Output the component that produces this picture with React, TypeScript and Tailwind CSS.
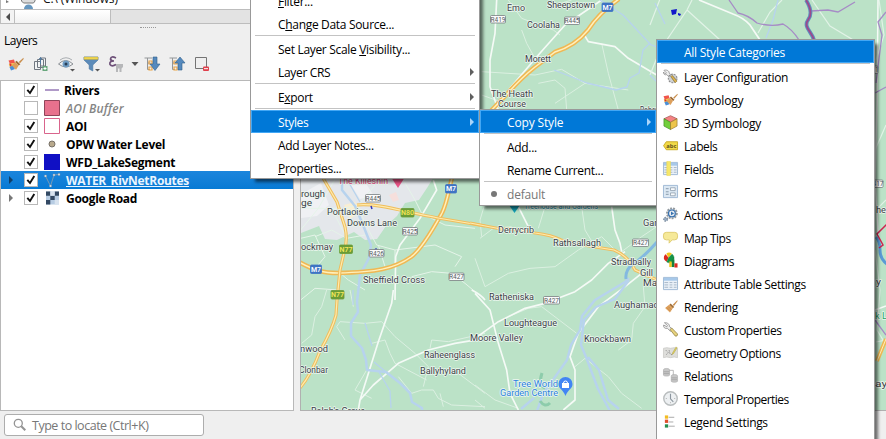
import React from "react";

type IconProps = { children: React.ReactNode; className?: string };

function Ico({ children, className = "" }: IconProps) {
  return (
    <svg viewBox="0 0 16 16" className={"h-4 w-4 shrink-0 overflow-visible " + className} fill="none">
      {children}
    </svg>
  );
}

const Brush = () => (
  <>
    <path d="M15.200 1.200 10.400 6l1.300 1.400L15.600 2.200Z" fill="#c98d4b" />
    <path d="M8 4.800 12 8.600 10.300 9.800 6.800 6.300Z" fill="#9b6a35" />
    <path d="M6.800 5.800 10.600 9.500 7.400 14.500 2.200 9.600Z" fill="#e0a562" />
    <path d="m4 9 4 4M5.500 8l3.500 3.500" stroke="#b87836" strokeWidth=".6" />
  </>
);

const Symbology = () => (
  <>
    <path d="M.5 4.500 6 3.500 7 7 2 8Z" fill="#f0554b" />
    <path d="M.8 8 6 7l1 3-5 1.500Z" fill="#f5c64a" />
    <path d="M1.500 11 5 9.500 7 13l-4 1.500Z" fill="#4c8fd6" />
    <path d="m1.500 7 2.500 2-2 1.500Z" fill="#d62c36" />
    <path d="M15.400 1.800 10.800 6l1.200 1.200L15.700 3Z" fill="#c98d4b" />
    <path d="M8.500 4.800 12.300 8.300 10.800 9.500 7.200 6Z" fill="#9b6a35" />
    <path d="m7.200 6 3.500 3.400L8 13.800 3.800 9.500Z" fill="#dda05c" />
  </>
);

const Wrench = () => (
  <>
    <path
      d="M1.500.8 4.800 3.800 4 5 .7 3.200C0 5.500 2.200 7.600 4.600 6.700L8 10l2-2.300-3.200-3C7.600 2.500 4 .2 1.500.8Z"
      fill="#eee"
      stroke="#858585"
      strokeWidth=".8"
    />
    <path d="m7.500 8 1.800-1.600 6 6.200c.9 1.800-1.200 3.200-2.400 2.200Z" fill="#e8d37d" stroke="#8b7c42" strokeWidth=".8" />
  </>
);

const Table = () => (
  <>
    <path d="M.5 1.500h15v13H.5Z" fill="#eaf1f8" stroke="#9fb9d4" />
    <path d="M1 2h14v3H1Z" fill="#a7c8e9" />
    <path d="M1.500 7h4M1.500 9.500h4M1.500 12h4M7 7h3M7 9.500h3M7 12h3M11.500 7h3M11.500 9.500h3M11.500 12h3" stroke="#a4b4c5" />
  </>
);

const styleIcons: Record<string, React.ReactNode> = {
  config: (
    <>
      <path d="M1 1.500 3.500 4 2.500 5.300.5 3.200C.3 5.500 2 6.800 4 6l3 3 2-2.300-2.500-2.400C7 2 3.500.3 1 1.500Z" fill="#eee" stroke="#888" strokeWidth=".8" />
      <circle cx="10.300" cy="10" r="4.600" fill="#cfd2d5" stroke="#8d8d8d" strokeWidth="1.200" strokeDasharray="2 1.200" />
      <path d="m7.500 7 1.800-1 5.300 5.800-2 2.500Z" fill="#eee" stroke="#777" strokeWidth=".6" />
      <path d="m8.500 8 1.300-1 5 6-1.800 1.500Z" fill="#e5b94e" stroke="#8e742f" strokeWidth=".7" />
    </>
  ),
  symbology: <Symbology />,
  cube: (
    <>
      <path d="M8 .7 15 4 8 7.800 1 4Z" fill="#f48383" stroke="#9c4848" strokeWidth=".7" />
      <path d="M1 4 8 7.800V15.500L1 11.800Z" fill="#72cf3b" stroke="#3e8a22" strokeWidth=".7" />
      <path d="M15 4 8 7.800V15.500l7-3.700Z" fill="#edc54b" stroke="#95752a" strokeWidth=".7" />
    </>
  ),
  labels: (
    <>
      <path d="M3.500 4h12v8.500h-12L.6 8.200Z" fill="#f1d947" stroke="#c7aa25" />
      <text x="3.500" y="10.500" fontSize="6.200" fontWeight="700" fill="#5e511d" fontFamily="Open Sans, sans-serif" letterSpacing="0" textLength="11">abc</text>
    </>
  ),
  fields: (
    <>
      <Table />
      <path d="M4 .5h4v15H4Z" fill="#f6e76a" stroke="#ecd94c" strokeWidth=".5" />
    </>
  ),
  forms: (
    <>
      <path d="M.5 1.500h15v13H.5Z" fill="#dce8f3" stroke="#9fb9d4" />
      <path d="M8 4h5v3H8ZM8 9.500h5v3H8Z" fill="#f9fbfc" stroke="#8999a9" strokeWidth=".8" />
      <path d="M3 5h3M3 8.300h3M3 11h3" stroke="#8396a9" />
    </>
  ),
  actions: (
    <>
      <circle cx="9.500" cy="6.800" r="5.300" fill="#d4d9de" stroke="#92999f" strokeWidth="2" strokeDasharray="2 1.200" />
      <circle cx="9.500" cy="6.800" r="3.600" fill="#e5eaf0" stroke="#346fae" strokeWidth="1.300" />
      <path d="m8.500 4.800 3.300 2-3.300 2Z" fill="#3672b0" />
      <circle cx="2.800" cy="13" r="1.900" fill="#9db2c9" stroke="#8293a5" strokeWidth="1.600" strokeDasharray="1.500 .8" />
    </>
  ),
  tips: <path d="M3.500 2.500h9A3 3 0 0 1 15.500 5.500v2a3 3 0 0 1-3 3H9.800L6.500 14l.2-3.500H3.500a3 3 0 0 1-3-3v-2a3 3 0 0 1 3-3Z" fill="#f6e998" stroke="#dfcc70" />,
  diagrams: (
    <>
      <path d="M6 4.700 3.500.8a4.700 4.700 0 0 1 6 0Z" fill="#f2c51b" />
      <path d="M6 5 2.800 1.200a4.700 4.700 0 0 0 1 8.200Z" fill="#dc2b20" />
      <path d="m6 5 3.600-3.800A4.900 4.900 0 0 1 4 9.600Z" fill="#159447" stroke="#0d6b34" strokeWidth=".4" />
      <path d="M6.700 9h2.700v6H6.700Z" fill="#f2c51b" />
      <path d="M9.400 7h2.800v8H9.400Z" fill="#15813c" />
      <path d="M12.200 11h3.300v4.500h-3.300Z" fill="#dc2b20" />
    </>
  ),
  table: <Table />,
  rendering: <Brush />,
  custom: <Wrench />,
  geometry: (
    <>
      <path d="M.5 3.500 4 2.800 8 3.500l4-.7 3.500.7v10l-3.500-.7-4 .7-4-.7-3.500.7Z" fill="#dededb" stroke="#c3c3c0" strokeWidth=".7" />
      <path d="M3 5.500 5.500 8l-2.500 3M6.500 5.500l1 4 3 1.500" stroke="#8c8c8c" strokeDasharray="1.500 1" />
      <path d="m14 2-3.700 6.200-.5 2 1.500-1.200L15 3Z" fill="#e7d65c" stroke="#a2983c" strokeWidth=".5" />
    </>
  ),
  relations: (
    <>
      <path d="M.5 2c0-2 6.500-2 6.500 0v5.500c0 1.500-6.500 1.500-6.500 0ZM8.800 8.500c0-2 6.700-2 6.700 0v5.500c0 1.500-6.700 1.500-6.700 0Z" fill="#c7c7c7" stroke="#adadad" strokeWidth=".7" />
      <path d="M.7 4h6M.7 6h6M9 10.500h6M9 12.500h6M7 2.500h4V7" stroke="#999" strokeWidth=".7" />
    </>
  ),
  temporal: (
    <>
      <circle cx="8" cy="8" r="7.200" fill="#edf0f2" stroke="#b9bdbe" strokeWidth="1.500" />
      <path d="M8 3v5.300l3 3.200" stroke="#8c969f" strokeWidth="1.200" />
      <path d="M3 8h1M12 8h1M8 12v1" stroke="#aaa" />
    </>
  ),
  legend: (
    <>
      <path d="M2 1.500h3.500V5H2Z" fill="#f3bc22" />
      <path d="M2 6h3.500v3.500H2Z" fill="#df4f2c" />
      <path d="M2 11h3.500v3.500H2Z" fill="#268f50" />
      <path d="M6 3.500h6M6 8.500h5M6 13h6.500" stroke="#a5a5a5" strokeWidth="1" />
    </>
  ),
};

const styleItems: [string, string, string][] = [
  ["config", "Layer Configuration", ""],
  ["symbology", "Symbology", "tracking-[-0.180px]"],
  ["cube", "3D Symbology", "tracking-[-0.220px]"],
  ["labels", "Labels", "tracking-[-0.400px]"],
  ["fields", "Fields", "tracking-[-0.400px]"],
  ["forms", "Forms", ""],
  ["actions", "Actions", ""],
  ["tips", "Map Tips", "tracking-[-0.500px]"],
  ["diagrams", "Diagrams", "tracking-[-0.400px]"],
  ["table", "Attribute Table Settings", "tracking-[-0.380px]"],
  ["rendering", "Rendering", "tracking-[-0.400px]"],
  ["custom", "Custom Properties", "tracking-[-0.400px]"],
  ["geometry", "Geometry Options", "tracking-[-0.400px]"],
  ["relations", "Relations", ""],
  ["temporal", "Temporal Properties", "tracking-[-0.530px]"],
  ["legend", "Legend Settings", ""],
];

type LabelProps = { x: number; y: number; w: number; t: string; c?: string; s?: number };

function Place({ x, y, w, t, c = "#3b4147", s = 9.5 }: LabelProps) {
  return (
    <text x={x} y={y} textLength={w} lengthAdjust="spacingAndGlyphs" fontSize={s} fill={c} stroke="#edf7f0" strokeWidth="1.500" paintOrder="stroke" strokeLinejoin="round">
      {t}
    </text>
  );
}

function Shield({ x, y, w, t, kind }: { x: number; y: number; w: number; t: string; kind: "m" | "n" | "r" }) {
  const fill = kind === "m" ? "#3f74c4" : kind === "n" ? "#6a9c37" : "#fbfbfb";
  const ink = kind === "m" ? "#fff" : kind === "n" ? "#f5e85b" : "#555b60";
  return (
    <g>
      <rect x={x} y={y} width={w} height={kind === "r" ? 7.5 : 8.5} rx="1" fill={fill} stroke={kind === "r" ? "#777d80" : fill} strokeWidth=".8" />
      <text x={x + w / 2} y={y + (kind === "r" ? 6.2 : 6.8)} textAnchor="middle" fontSize={kind === "r" ? 6.5 : 7} fontWeight={kind === "r" ? 400 : 600} fill={ink}>
        {t}
      </text>
    </g>
  );
}

const third = 1 / 3;
const motorway = [
  "M297 261C315 271 324 273 338 273C376 272 394 269 411 257C423 248 437 222 442 213C451 195 449 170 466 145Q476 130 492 110",
  "M486 116L508 93Q521 78 535 67L555 52Q575 46 588 30Q599 13 619 -1",
];
const national = [
  "M357 205C378 203 401 211 438 218L485 226",
  "M323 178L337 202 345 227Q348 240 344 253L340 270 337 300 336 315Q332 330 320 351 311 375 300 388",
  "M470 223L501 229Q521 229 535 233 552 235 561 240L589 246 614 250Q628 256 635 270L657 280",
];

function MapView() {
  return (
    <svg viewBox="301 0 585 410" preserveAspectRatio="none" className="block h-[410px] w-[585px]" fill="none" fontFamily="Roboto, sans-serif">
      <rect x="301" y="0" width="585" height="410" fill="#bbe2c7" />
      <path d="M301 175H435L427 188 419 200 405 203 397 216 386 226 377 239 365 240 354 232 337 240 325 239 319 226 301 233Z" fill="#e4e7eb" />
      <path d="M301 194 321 183 329 205 317 216 301 218ZM351 185H367L374 196 360 199Z" fill="#f0f1f4" />
      <path d="m389 195 7-3 3 8-6 2Z" fill="#f6dfdc" />
      <path d="M344 205 355 202 362 211 350 219Z" fill="#f9eed2" />

      {/* Local roads, upper and lower left of the canvas */}
      <g transform={`translate(295 170) scale(${third})`} stroke="#e5f4e9" strokeWidth="3" strokeLinejoin="round">
        <path d="M17 115H145L190 105 240 45M17 180 70 115 120 28M60 200 110 180 155 205 210 195M115 125 155 205M17 205 60 195 90 260 65 290M190 105 210 160 245 225 300 240 420 225 500 260 480 290M250 225 270 290M300 240 300 290M350 320 410 305 470 310 510 340 570 390M17 390 60 355 130 360M325 30 360 90 380 130 450 165 540 175M130 305 160 330 210 360" />
        <path d="M300 390 302 260 315 225 375 145 425 60 415 30" stroke="#f5faf6" strokeWidth="5" />
      </g>
      <g transform={`translate(295 290) scale(${third})`} stroke="#dcf0e2" strokeWidth="3" strokeLinejoin="round">
        <path d="M95 0 80 50 60 80 50 135 20 160M165 0 175 50M150 150 125 110 135 95 210 100 260 95 300 140 360 190 400 230 385 290M230 160 270 150 285 190 300 220 395 270M215 240 180 300 230 325M405 175 410 150 460 155 570 130M400 240 490 250 570 310M380 300 415 300 430 325 470 345 570 350M310 260 350 310 380 300M435 310 445 350" />
        <path d="M295 0 290 40 250 155 195 330 190 360M195 330 235 285 310 220 400 180 480 160 570 145M530 0Q560 15 570 30" stroke="#f4faf6" strokeWidth="5" />
      </g>

      {/* Local roads in the centre */}
      <g transform={`translate(475 0) scale(${third})`} stroke="#dbf0e1" strokeWidth="3" strokeLinejoin="round">
        <path d="M100 0 140 55 235 90 255 105M225 20 290 0M140 90 155 130 180 175M20 215 180 225 260 208 330 250 460 270M190 250 240 240 270 265 275 330M380 130 400 220 430 330M240 310 300 270 330 250M20 285 90 310 110 330" />
        <path d="M65 0 60 100 45 180 45 260 70 330M380 0 270 75 190 165 105 265 60 330M325 100 340 125 420 140 460 175 545 225" stroke="#f5faf6" strokeWidth="5" />
      </g>
      <g transform={`translate(475 200) scale(${third})`} stroke="#dbf0e1" strokeWidth="3" strokeLinejoin="round">
        <path d="M20 110 15 60 30 10M15 115 55 85 110 80M190 85 210 20M320 20 330 90 360 140 440 155M0 175 30 260 100 220 165 205 240 200 310 150 380 110 425 155M440 155 500 110 545 80M100 350 160 325 200 320 305 400M505 260 510 320 475 370 470 420 430 450M0 555 60 600 130 625M300 500 330 475 400 530 440 580 500 625M0 600 30 625" />
        <path d="M130 20 160 80M410 20 420 90 435 130 440 155M0 280 45 330 70 430 95 510 105 580 130 630M0 415 70 365 150 325 210 310 300 275 350 240 400 190 450 155M500 220 450 260 370 320 310 400 285 470 300 510 300 600 265 630" stroke="#f5faf6" strokeWidth="5" />
      </g>
      <g stroke="#e2f3e7" strokeWidth="1.200">
        <path d="M650 75 660 50 687 10 692 0M687 10 720 40M650 25 660 -1M758 33 770 12 782 0M812 0 830 26 870 50M876 60 884 35 879 0M875 150 886 125M876 210 886 200M875 250 880 290 877 330 886 345M876 342 886 340" />
        <path d="M699 0Q721 9 733 14 744 18 750 25L760 40" stroke="#f5faf6" strokeWidth="1.700" />
        <path d="M878 0 877 100 875 180 879 250M875 310 886 306" stroke="#f5faf6" strokeWidth="1.500" />
      </g>

      {/* Rivers */}
      <g stroke="#b7d3ee" strokeWidth="1.300" strokeLinejoin="round">
        <path d="M342 178 342 190 355 206 363 225 371 245 369 258 360 275 357 302 358 312 351 323 351 336 362 348 366 360 367 370 386 372 400 383 410 393 412 402 422 408V411" strokeWidth="2.500" />
        <path d="M353 290V305M365 323 372 346M374 362 386 372M379 372 390 391 391 408M345 176 360 202" />
        <path d="M600 0 623 15 651 45M554 70 587 83 616 90 627 87 630 78 639 73 643 50 649 44 657 47M655 3 665 24M778 0 773 20 766 38M650 75 657 82" />
        <path d="M629 278 625 282 595 300 582 316 580 330 571 345 567 360 543 394 537 411M629 280 615 299 596 307 584 320 581 345 586 357 598 389 610 411M588 357 599 370 608 400 619 409M521 409 534 398" strokeWidth="2.400" />
      </g>

      {motorway.map((d) => (
        <g key={d}>
          <path d={d} stroke="#efb854" strokeWidth="4.500" />
          <path d={d} stroke="#fff0bb" strokeWidth="1.500" />
        </g>
      ))}
      {national.map((d) => (
        <g key={d}>
          <path d={d} stroke="#efbd5d" strokeWidth="3.200" />
          <path d={d} stroke="#ffebac" strokeWidth="1.200" />
        </g>
      ))}
      <path d="M657 242Q644 257 633 264 625 270 626 279" stroke="#83b9e0" strokeWidth="3" />
      <path d="m371 206 1 3M373 251l3-2 3 3 3 1" stroke="#3036b9" strokeWidth="1.500" />
      <path d="M542 373Q538 385 545 388M540 401Q545 408 550 403" stroke="#8dccab" strokeWidth="3" />

      {/* Area boundary and route overlay */}
      <path d="m671 10 6-1-1 5-4 1ZM678 13l3 1-1 2-2-1Z" fill="#1016ca" />
      <path d="M729 0 738 13Q748 15 757 23 771 27 783 24 792 29 799 40M811 11 828 10 838 12 855 2M886 12 878 22 882 35 876 83M875 93 886 87M875 320 886 335" stroke="#a68bc6" strokeWidth="1.300" />
      <path d="M806 0C811 8 812 15 808 20C803 27 812 32 814 40" stroke="#5f8fbd" strokeWidth="3.800" />
      <path d="M806 0C811 8 812 15 808 20C803 27 812 32 814 40" stroke="#9c498d" strokeWidth="1.800" />
      <path d="M876 237Q880 241 880 250 880 259 887 264" stroke="#5a9bd5" strokeWidth="3" />
      <path d="M887 224 877 234 883 245 879 248" stroke="#ce2350" strokeWidth="1.500" />
      <path d="m877 361 9-22" stroke="#efb854" strokeWidth="4" />
      <path d="m877 361 9-22" stroke="#fff0bb" />

      <Place x={507} y={11} w={18} t="Emo" />
      <Place x={547} y={8} w={48} t="Sheepstown" />
      <Place x={527} y={28} w={33} t="Coolaha" />
      <Place x={525} y={62} w={26} t="Morett" />
      <Place x={491} y={97} w={42} t="The Heath" />
      <Place x={498} y={107} w={28} t="Course" />
      <Place x={640} y={113} w={38} t="Robertstown" />
      <Place x={338} y={184} w={50} t="The Killeshin" c="#e23e79" />
      <Place x={301} y={197} w={24} t="rough" />
      <Place x={301} y={206} w={11} t="ge" />
      <Place x={327} y={215} w={41} t="Portlaoise" />
      <Place x={347} y={226} w={50} t="Downs Lane" />
      <Place x={301} y={250} w={32} t="ockmay" />
      <Place x={363} y={283} w={62} t="Sheffield Cross" />
      <Place x={498} y={233} w={36} t="Derrycrib" />
      <Place x={553} y={246} w={48} t="Rathsallagh" />
      <Place x={611} y={265} w={40} t="Stradbally" />
      <Place x={643} y={226} w={32} t="Garrans" />
      <Place x={640} y={276} w={13} t="Gill" />
      <Place x={643} y={286} w={22} t="Main" />
      <Place x={489} y={300} w={45} t="Ratheniska" />
      <Place x={504} y={326} w={53} t="Loughteague" />
      <Place x={614} y={308} w={50} t="Aughamadd" />
      <Place x={470} y={341} w={53} t="Moore Valley" />
      <Place x={584} y={342} w={47} t="Knockbawn" />
      <Place x={424} y={358} w={51} t="Raheenglass" />
      <Place x={420} y={374} w={46} t="Ballyhyland" />
      <Place x={300} y={352} w={28} t="nwood" />
      <Place x={299} y={373} w={29} t="Clonbar" />
      <Place x={311} y={414} w={54} t="Ralph's Grove" />
      <Place x={513} y={387} w={45} t="Tree World" c="#2c82dd" />
      <Place x={500} y={396} w={58} t="Garden Centre" c="#2c82dd" />
      <Place x={524} y={209} w={74} t="Treehouse and Gardens" c="#168d9e" />
      <Place x={876} y={213} w={10} t="he" />
      <Place x={876} y={285} w={5} t="y" />
      <Place x={875} y={319} w={12} t="k L" c="#28a268" />
      <Place x={875} y={387} w={12} t="ay" />

      <Shield x={602} y={3} w={11} t="M7" kind="m" />
      <Shield x={445.5} y={184.5} w={11} t="M7" kind="m" />
      <Shield x={310.5} y={265} w={11} t="M7" kind="m" />
      <Shield x={401} y={208.5} w={13} t="N80" kind="n" />
      <Shield x={339.5} y={245} w={13} t="N77" kind="n" />
      <Shield x={331} y={290.5} w={13} t="N77" kind="n" />
      <Shield x={365.5} y={194.5} w={15} t="R445" kind="r" />
      <Shield x={402.5} y={227.5} w={15} t="R425" kind="r" />
      <Shield x={369} y={249.5} w={15} t="R426" kind="r" />
      <Shield x={449} y={273} w={15} t="R427" kind="r" />
      <Shield x={490.5} y={15.5} w={15} t="R419" kind="r" />
      <Shield x={564.5} y={17} w={15} t="R445" kind="r" />
      <Shield x={632.5} y={239} w={16} t="R427" kind="r" />
      <Shield x={543.5} y={296.5} w={16} t="R427" kind="r" />
      <Shield x={869} y={180} w={14} t="R417" kind="r" />
      <Shield x={868} y={66} w={10} t="R41" kind="r" />

      <path d="m391 177 7 11 7-11Z" fill="#e95486" />
      <path d="m509 205 5.500 8 5.500-8Z" fill="#13a0b4" />
      <path d="M565.500 396C563 389 558.500 389 558.500 384a7 7 0 0 1 14 0c0 5-4.500 5-7 12Z" fill="#4285f4" />
      <path d="M562 383h7v5h-7Z" fill="#fff" />
      <path d="M563.500 383a2 2 0 0 1 4 0" stroke="#fff" />
    </svg>
  );
}

function Arrow({ on = false }: { on?: boolean }) {
  return (
    <svg viewBox="0 0 4 8" className="ml-auto mr-1 h-2 w-1 shrink-0">
      <path d="M0 0 4 4 0 8Z" fill={on ? "#a9d5fb" : "#5f5f5f"} />
    </svg>
  );
}

type RowProps = { children: React.ReactNode; arrow?: boolean; on?: boolean };

function MenuRow({ children, arrow = false, on = false }: RowProps) {
  return (
    <div
      className={
        "flex h-[23px] shrink-0 items-center whitespace-nowrap border pl-[26px] " +
        (on ? "border-[#42a7f5] bg-[#0078d7] text-white" : "border-transparent")
      }
    >
      <span className="pt-0.5">{children}</span>
      {arrow && <Arrow on={on} />}
    </div>
  );
}

const Line = () => <div className="mx-1 mb-px h-px shrink-0 bg-[#c3c3c3]" />;

const U = ({ children }: { children: string }) => <span className="underline underline-offset-1">{children}</span>;

function Check({ on = true }: { on?: boolean }) {
  return (
    <span className="flex h-[14px] w-[14px] shrink-0 items-center justify-center border border-[#b8b8b8] bg-white">
      {on && (
        <svg viewBox="0 0 12 12" className="h-3 w-3" fill="none">
          <path d="M2.300 5.800 5 9 9.300 2" stroke="#111" strokeWidth="1.900" />
        </svg>
      )}
    </span>
  );
}

type Layer = { name: string; symbol: React.ReactNode; style?: string; off?: boolean; expand?: boolean; selected?: boolean };

const layers: Layer[] = [
  { name: "Rivers", symbol: <path d="M1 8h14" stroke="#b09ac8" strokeWidth="2" />, style: "-ml-0.5 font-bold tracking-[-0.250px]" },
  { name: "AOI Buffer", off: true, symbol: <path d="M.5.5h15v15H.5Z" fill="#e8718d" stroke="#8e4459" />, style: "font-semibold italic text-[#858585] tracking-[0.150px]" },
  { name: "AOI", symbol: <path d="M.5.5h15v15H.5Z" fill="#fff" stroke="#d9648c" />, style: "font-bold tracking-[-0.350px]" },
  { name: "OPW Water Level", symbol: <circle cx="8" cy="8" r="3" fill="#b8a98c" stroke="#777067" />, style: "font-bold tracking-[-0.250px]" },
  { name: "WFD_LakeSegment", symbol: <path d="M0 0h16v16H0Z" fill="#1010c4" />, style: "font-bold tracking-[-0.250px]" },
  {
    name: "WATER_RivNetRoutes",
    expand: true,
    selected: true,
    symbol: (
      <>
        <path d="m1.500 4 5 10L10 3l4-.5" stroke="#7899b5" />
        <path d="M.5 3h2v2h-2ZM5.500 13h2v2h-2ZM9 2h2v2H9ZM14 1.500h2v2h-2Z" fill="#e9edf0" stroke="#718ea8" strokeWidth=".5" />
      </>
    ),
    style: "font-bold underline text-[#eaf5ff] tracking-[-0.300px]",
  },
  {
    name: "Google Road",
    expand: true,
    symbol: (
      <>
        <path d="M2 1.500h13v13H2Z" fill="#b7cce3" />
        <path d="M2 1.500h4.300v4.300H2ZM10.700 1.500H15v4.300h-4.300ZM6.300 5.800h4.400v4.300H6.300ZM2 10.100h4.300v4.400H2Z" fill="#334963" />
        <path d="M10.700 10.100H15v4.400h-4.300ZM6.300 1.500h4.400v4.300H6.300Z" fill="#d8e3ef" />
      </>
    ),
    style: "font-bold tracking-[-0.300px]",
  },
];

const tools: [string, React.ReactNode][] = [
  ["ml-2", <Symbology key="a" />],
  ["ml-[9px]", (
    <g key="b">
      <path d="M1.500 5.500h6v8h-6ZM4.500 3.500h6v8h-6ZM7.500 2h5v8h-5Z" stroke="#707780" fill="#f1f3f4" />
      <path d="M7.500 8V1.500M5.800 3.500l1.700-2 1.800 2" stroke="#527a9f" />
      <path d="M9.500 10h5v5h-5Z" fill="#68a77c" />
      <path d="M12 11v3M10.500 12.500h3" stroke="#fff" />
    </g>
  )],
  ["ml-[9px]", (
    <g key="c">
      <path d="M.5 8Q7.500 1 15 8 8 14 .5 8Z" fill="#f3f4f5" stroke="#8a8f94" />
      <circle cx="8" cy="8" r="3.500" fill="#6f9cc3" />
      <circle cx="8" cy="8" r="1.500" fill="#293e55" />
      <path d="M2 4Q8-.5 14 4" stroke="#a9adb1" />
      <path d="M12 13h5l-2.500 2.500Z" fill="#555" />
    </g>
  )],
  ["ml-[9px]", (
    <g key="d">
      <path d="M1 1h14v3L9.800 9v6l-3.600-2V9L1 4Z" fill="#5c8bb9" stroke="#45739f" strokeWidth=".6" />
      <path d="M1 1h14v2.500H1Z" fill="#f0d54e" stroke="#b2a13c" strokeWidth=".4" />
      <path d="M12 13h5l-2.500 2.500Z" fill="#555" />
    </g>
  )],
  ["ml-[9px]", (
    <g key="e">
      <path d="M8 2Q3-.5 2.500 3 2.800 5 6 5 1 5 2 8.500 4 11 8 8.500" stroke="#6d5078" strokeWidth="1.700" />
      <path d="M8 8h7v3l-1.500 1.500V16h-2v-3.500H10V16H8Z" fill="#b6b7b9" />
    </g>
  )],
  ["ml-0.5", <path key="f" d="M5.500 6h7L9 10Z" fill="#555" />],
  ["ml-[2px]", (
    <g key="g">
      <path d="M.5 2H8M3.500 2v11.500H6M3.500 7h3" stroke="#939698" />
      <path d="M5 5h3v3H5ZM5 11h3v3H5Z" stroke="#eba547" strokeWidth="1.200" />
      <path d="M9 1h4v7h3l-5 6.500L6 8h3Z" fill="#5589bd" stroke="#315f8c" strokeWidth=".6" />
    </g>
  )],
  ["ml-[9px]", (
    <g key="h">
      <path d="M.5 2H8M3.500 2v11.500H6M3.500 7h3" stroke="#939698" />
      <path d="M5 5h3v3H5ZM5 11h3v3H5Z" stroke="#eba547" strokeWidth="1.200" />
      <path d="M9 14h4V7h3l-5-6-5 6h3Z" fill="#5589bd" stroke="#315f8c" strokeWidth=".6" />
    </g>
  )],
  ["ml-[9px]", (
    <g key="i">
      <path d="M1.500 1.500h11v11h-11Z" stroke="#747474" />
      <rect x="9" y="10.500" width="6" height="4.500" rx="1" fill="#df3f4b" />
      <path d="M10 12.700h4" stroke="#fff" />
    </g>
  )],
];

export default function App() {
  return (
    <div className="relative h-[439px] w-[886px] overflow-hidden bg-[#efefef] font-['Open_Sans','Noto_Sans',sans-serif] text-[12px] leading-[18px] tracking-[-0.320px] text-black">
      <div className="flex">
        <aside className="flex w-[300px] flex-col">
          <div className="flex h-[9px] items-end overflow-hidden border-l border-[#b8b8b8] bg-white">
            <svg viewBox="0 0 299 9" className="h-[9px] w-[299px]" fill="none" fontFamily="Open Sans">
              <path d="m5 0 3 2-3 1Z" fill="#777" />
              <path d="M20.500-4v5l2 2h10l1.500-2v-5" fill="#ddd" stroke="#777" />
              <path d="M23 9a4.500 4.500 0 0 1 9 0" fill="#6797bf" />
              <text x="42" y="2.500" fontSize="12" fill="#111" letterSpacing="0" textLength="75">C:\ (Windows)</text>
            </svg>
          </div>
          <div className="flex h-[15px] border-y border-[#bdbdbd] bg-[#e3e3e3]">
            <div className="flex w-[15px] items-center justify-center border-x border-[#bdbdbd] bg-[#f3f3f3]">
              <svg viewBox="0 0 4 8" className="h-2 w-1"><path d="M4 0 0 4l4 4Z" fill="#4b4b4b" /></svg>
            </div>
            <div className="w-24 border-r border-[#bdbdbd] bg-gradient-to-b from-white to-[#f2f2f2]" />
          </div>
          <div className="flex h-[6px] items-center pl-[140px]">
            <div className="w-4 border-t border-dotted border-[#999]" />
          </div>
          <h2 className="h-5 pl-1 leading-[22px] tracking-[-0.500px]">Layers</h2>
          <div className="flex h-[30px] items-center pb-0.5">
            {tools.map(([gap, icon], i) => (
              <Ico key={i} className={gap}>{icon}</Ico>
            ))}
          </div>
          <div className="h-[331px] w-[294px] border border-[#b8b8b8] bg-white">
            {layers.map((l) => (
              <div key={l.name} className={"flex h-[18px] items-center " + (l.selected ? "bg-gradient-to-b from-[#1b85dc] to-[#077ad4]" : "")}>
                <span className="flex w-[23px] shrink-0 pl-2">
                  {l.expand && (
                    <svg viewBox="0 0 4 8" className="h-2 w-1"><path d="M0 0 4 4 0 8Z" fill={l.selected ? "#103e68" : "#777"} /></svg>
                  )}
                </span>
                <Check on={!l.off} />
                <Ico className="mr-1.5 ml-1.5">{l.symbol}</Ico>
                <span className={"whitespace-nowrap pt-0.5 " + (l.style ?? "")}>{l.name}</span>
              </div>
            ))}
          </div>
        </aside>
        <main className="h-[411px] w-[586px] overflow-hidden border-b border-l border-[#b0b0b0] tracking-normal">
          <MapView />
        </main>
      </div>
      <footer className="flex h-7 px-1 pt-[3px]">
        <div className="flex h-[22px] w-[200px] items-center rounded-[3px] border border-[#adadad] bg-white pl-2 text-[12.5px] tracking-[-0.480px] text-[#777]">
          <svg viewBox="0 0 14 14" className="mr-[5px] h-[14px] w-[14px]" fill="none" stroke="#939393">
            <circle cx="5.300" cy="5.300" r="4" strokeWidth="1.300" />
            <path d="m8.300 8.300 4 4" strokeWidth="2" />
          </svg>
          <span className="pt-0.5">Type to locate (Ctrl+K)</span>
        </div>
      </footer>

      <div className="absolute left-[250px] top-[-12px] flex h-[191px] w-[230px] flex-col border border-[#999] bg-white shadow-[4px_4px_3px_-1px_rgba(0,0,0,0.55)]">
        <MenuRow><U>F</U>ilter...</MenuRow>
        <MenuRow>C<U>h</U>ange Data Source...</MenuRow>
        <Line />
        <MenuRow>Set Layer Scale <U>V</U>isibility...</MenuRow>
        <MenuRow arrow>Layer CRS</MenuRow>
        <Line />
        <MenuRow arrow>E<U>x</U>port</MenuRow>
        <Line />
        <MenuRow on arrow>Styles</MenuRow>
        <MenuRow>Add Layer Notes...</MenuRow>
        <MenuRow><U>P</U>roperties...</MenuRow>
      </div>

      <div className="absolute left-[479px] top-[109px] flex h-[97px] w-[178px] flex-col border border-[#999] bg-white shadow-[4px_4px_3px_-1px_rgba(0,0,0,0.55)]">
        <MenuRow on arrow><span className="tracking-[-0.150px]">Copy Style</span></MenuRow>
        <Line />
        <MenuRow>Add...</MenuRow>
        <MenuRow>Rename Current...</MenuRow>
        <Line />
        <div className="flex h-[23px] items-center pl-[11px] text-[#777]">
          <span className="mr-[10px] h-1.5 w-1.5 rounded-full bg-[#777]" />
          <span className="pt-0.5 tracking-[-0.200px]">default</span>
        </div>
      </div>

      <div className="absolute left-[656px] top-[39px] flex h-[420px] w-[219px] flex-col border border-[#999] bg-white shadow-[4px_4px_3px_-1px_rgba(0,0,0,0.55)]">
        <MenuRow on><span className="tracking-[-0.250px]">All Style Categories</span></MenuRow>
        <Line />
        {styleItems.map(([icon, label, fit]) => (
          <div key={label} className="flex h-[23px] shrink-0 items-center whitespace-nowrap pl-[6px]">
            <Ico className="mr-[6px] !h-[15px] !w-[15px]">{styleIcons[icon]}</Ico>
            <span className={"pt-0.5 " + fit}>{label}</span>
          </div>
        ))}
      </div>
    </div>
  );
}
